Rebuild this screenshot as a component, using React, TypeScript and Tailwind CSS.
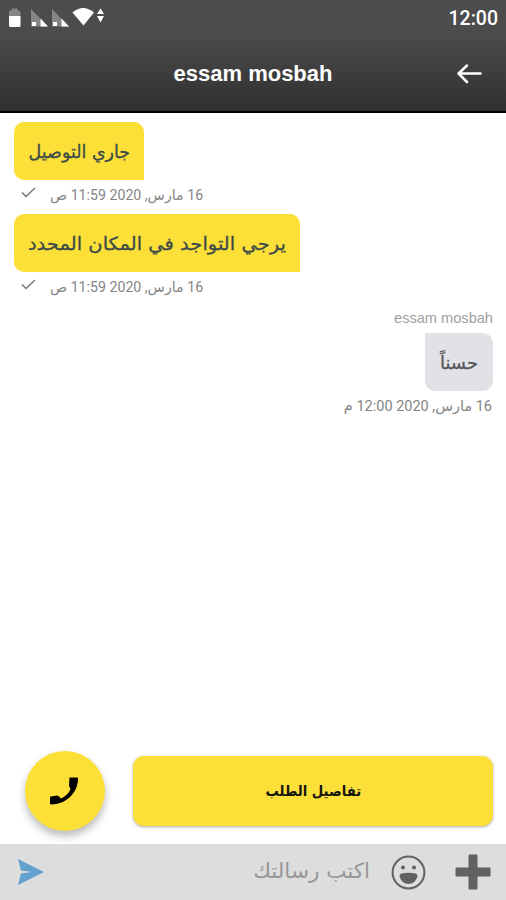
import type { ReactNode } from "react";

type Message = {
  id: number;
  text: string;
  time: string;
  width: string;
  textClass: string;
};

const sentMessages: Message[] = [
  {
    id: 1,
    text: "جاري التوصيل",
    time: "16 مارس, 2020 11:59 ص",
    width: "w-[130px]",
    textClass: "scale-x-[0.97]",
  },
  {
    id: 2,
    text: "يرجي التواجد في المكان المحدد",
    time: "16 مارس, 2020 11:59 ص",
    width: "w-[286px]",
    textClass: "scale-x-[1.085]",
  },
];

export default function App() {
  return (
    <div className="flex h-[900px] w-[506px] flex-col overflow-hidden bg-white font-['DejaVu_Sans',sans-serif]">
      <header className="h-[113px] shrink-0 border-b-2 border-black bg-linear-to-b from-[#4c4c4c] from-30% to-[#303030] text-white">
        <StatusBar />
        <div className="grid h-[76px] grid-cols-[60px_1fr_60px] items-center">
          <span />
          <h1 className="text-center font-['Liberation_Sans',sans-serif] text-[22px] leading-none font-bold">
            essam mosbah
          </h1>
          <BackIcon />
        </div>
      </header>

      <main className="flex grow flex-col pt-[9px] pr-[13px] pl-[14px]">
        {sentMessages.map((message) => (
          <div key={message.id}>
            <div
              className={`flex h-[58px] items-center justify-center rounded-[10px] rounded-br-none bg-[#fce038] ${message.width}`}
            >
              <Label
                className={`text-[18px] text-[#3d4a48] [-webkit-text-stroke:0.3px_#3d4a48] ${message.textClass}`}
              >
                {message.text}
              </Label>
            </div>
            <div className="flex h-[34px] pt-[7px] pl-[7px]">
              <CheckIcon />
              <Label className="ml-[14px] h-[18px] origin-left scale-x-[0.977] font-['Roboto','DejaVu_Sans',sans-serif] text-[14.500px] leading-[18px] text-[#858585]">
                {message.time}
              </Label>
            </div>
          </div>
        ))}

        <div className="flex flex-col items-end pt-[5px]">
          <span className="h-[22px] font-['Liberation_Sans',sans-serif] text-[14.600px] leading-[15px] text-[#a0a0a0]">
            essam mosbah
          </span>
          <div className="flex h-[58px] w-[68px] items-center justify-center rounded-[10px] rounded-tl-none bg-[#e1e2e5]">
            <Label className="text-[18px] text-[#56565a] [-webkit-text-stroke:0.3px_#56565a]">
              حسناً
            </Label>
          </div>
          <Label className="mt-[7px] mr-px h-[18px] font-['Roboto','DejaVu_Sans',sans-serif] text-[14.500px] leading-[18px] text-[#858585]">
            16 مارس, 2020 12:00 م
          </Label>
        </div>

        <div className="mt-auto mb-[13px] flex items-center gap-[28px] pl-[11px]">
          <button className="flex size-[80px] shrink-0 items-center justify-center rounded-full bg-[#fce038] shadow-[0_5px_9px_rgba(0,0,0,0.28)]">
            <PhoneIcon />
          </button>
          <button className="flex h-[70px] grow items-center justify-center rounded-[11px] bg-[#fce038] shadow-[0_1px_3px_rgba(0,0,0,0.35)]">
            <Label className="scale-x-[0.88] text-[15px] font-bold text-[#151510]">
              تفاصيل الطلب
            </Label>
          </button>
        </div>
      </main>

      <footer className="flex h-[56px] shrink-0 items-center bg-[#dddddd] pr-[15px] pl-[18px]">
        <SendIcon />
        <Label className="mr-[21px] ml-auto origin-right scale-x-[1.025] text-[21px] text-[#979797]">
          اكتب رسالتك
        </Label>
        <SmileIcon />
        <PlusIcon />
      </footer>
    </div>
  );
}

function Label({ className, children }: { className: string; children: ReactNode }) {
  return (
    <span dir="rtl" className={`inline-block whitespace-nowrap ${className}`}>
      {children}
    </span>
  );
}

function StatusBar() {
  return (
    <div className="flex h-[36px] items-center justify-between pr-[8px]">
      <svg width="110" height="36" viewBox="0 0 110 36" fill="#fff">
        <path d="M9 16v-4q0-1.500 1.500-1.500h1V8.500h6v2h1q2 0 2 2V16z" fill="#858585" />
        <path d="M9 16h11.500v9.500q0 1.500-1.500 1.500h-8.500q-1.500 0-1.500-1.500z" />
        <SignalIcon x={31} />
        <SignalIcon x={52} />
        <path d="M72.500 12.500Q83 3.500 94 12.500L83.500 25.500z" />
        <path d="M100.500 8.500l3.500 5.500h-7zM97 16h7l-3.500 6.500z" />
      </svg>
      <span className="pt-px font-['Roboto',sans-serif] text-[19.500px] leading-none font-medium">
        12:00
      </span>
    </div>
  );
}

function SignalIcon({ x }: { x: number }) {
  return (
    <g transform={`translate(${x} 9)`}>
      <path d="M0 0L17 17.500H0z" fill="#858585" />
      <path d="M9.500 9.500l7.500 8h-7.500z" />
      <path d="M1 13h4v4H1z" />
    </g>
  );
}

function BackIcon() {
  return (
    <svg
      width="28"
      height="24"
      viewBox="0 0 28 24"
      fill="none"
      stroke="#fff"
      strokeWidth="2.500"
      strokeLinecap="round"
      strokeLinejoin="round"
      className="ml-[9px]"
    >
      <path d="M25.500 11.500H3.500M12 3.500L3.500 11.500l8.500 8.500" />
    </svg>
  );
}

function CheckIcon() {
  return (
    <svg width="15" height="11" viewBox="0 0 15 11" fill="none" stroke="#777" strokeWidth="1.500">
      <path d="M1 5.500L5 9.500L14 1" />
    </svg>
  );
}

function PhoneIcon() {
  return (
    <svg width="30" height="30" viewBox="0 0 30 30" className="-ml-[3px]">
      <path d="M20.500 1.500h7.500q1 0 1 1C29 17 17 28.500 2 28.500q-1 0-1-1v-6q0-1 1-1l6-1q1 0 1.500.5l2.500 2.500c4.500-2 8-5.500 9.500-9.500L20.500 11q-.5-.5-.5-1.500z" />
    </svg>
  );
}

function SendIcon() {
  return (
    <svg width="27" height="26" viewBox="0 0 27 26" fill="#62a0cd">
      <path d="M0 0l26 13L0 26l3-11.500L14 13L3 11.500z" />
    </svg>
  );
}

function SmileIcon() {
  return (
    <svg width="35" height="35" viewBox="0 0 35 35" fill="#616161">
      <circle cx="17.500" cy="17.500" r="15.900" fill="none" stroke="#616161" strokeWidth="2" />
      <circle cx="12" cy="12.500" r="2" />
      <circle cx="23" cy="12.500" r="2" />
      <path d="M8.500 21q0-2 2-2.500 7-1.500 14 0 2 .5 2 2.500c-1 5-5 8-9 8s-8-3-9-8z" />
    </svg>
  );
}

function PlusIcon() {
  return (
    <svg width="36" height="36" viewBox="0 0 36 36" fill="#616161" className="ml-[29px]">
      <rect x="13.500" y="0.500" width="9" height="35" rx="1.200" />
      <rect x="0.500" y="13.500" width="35" height="9" rx="1.200" />
    </svg>
  );
}
